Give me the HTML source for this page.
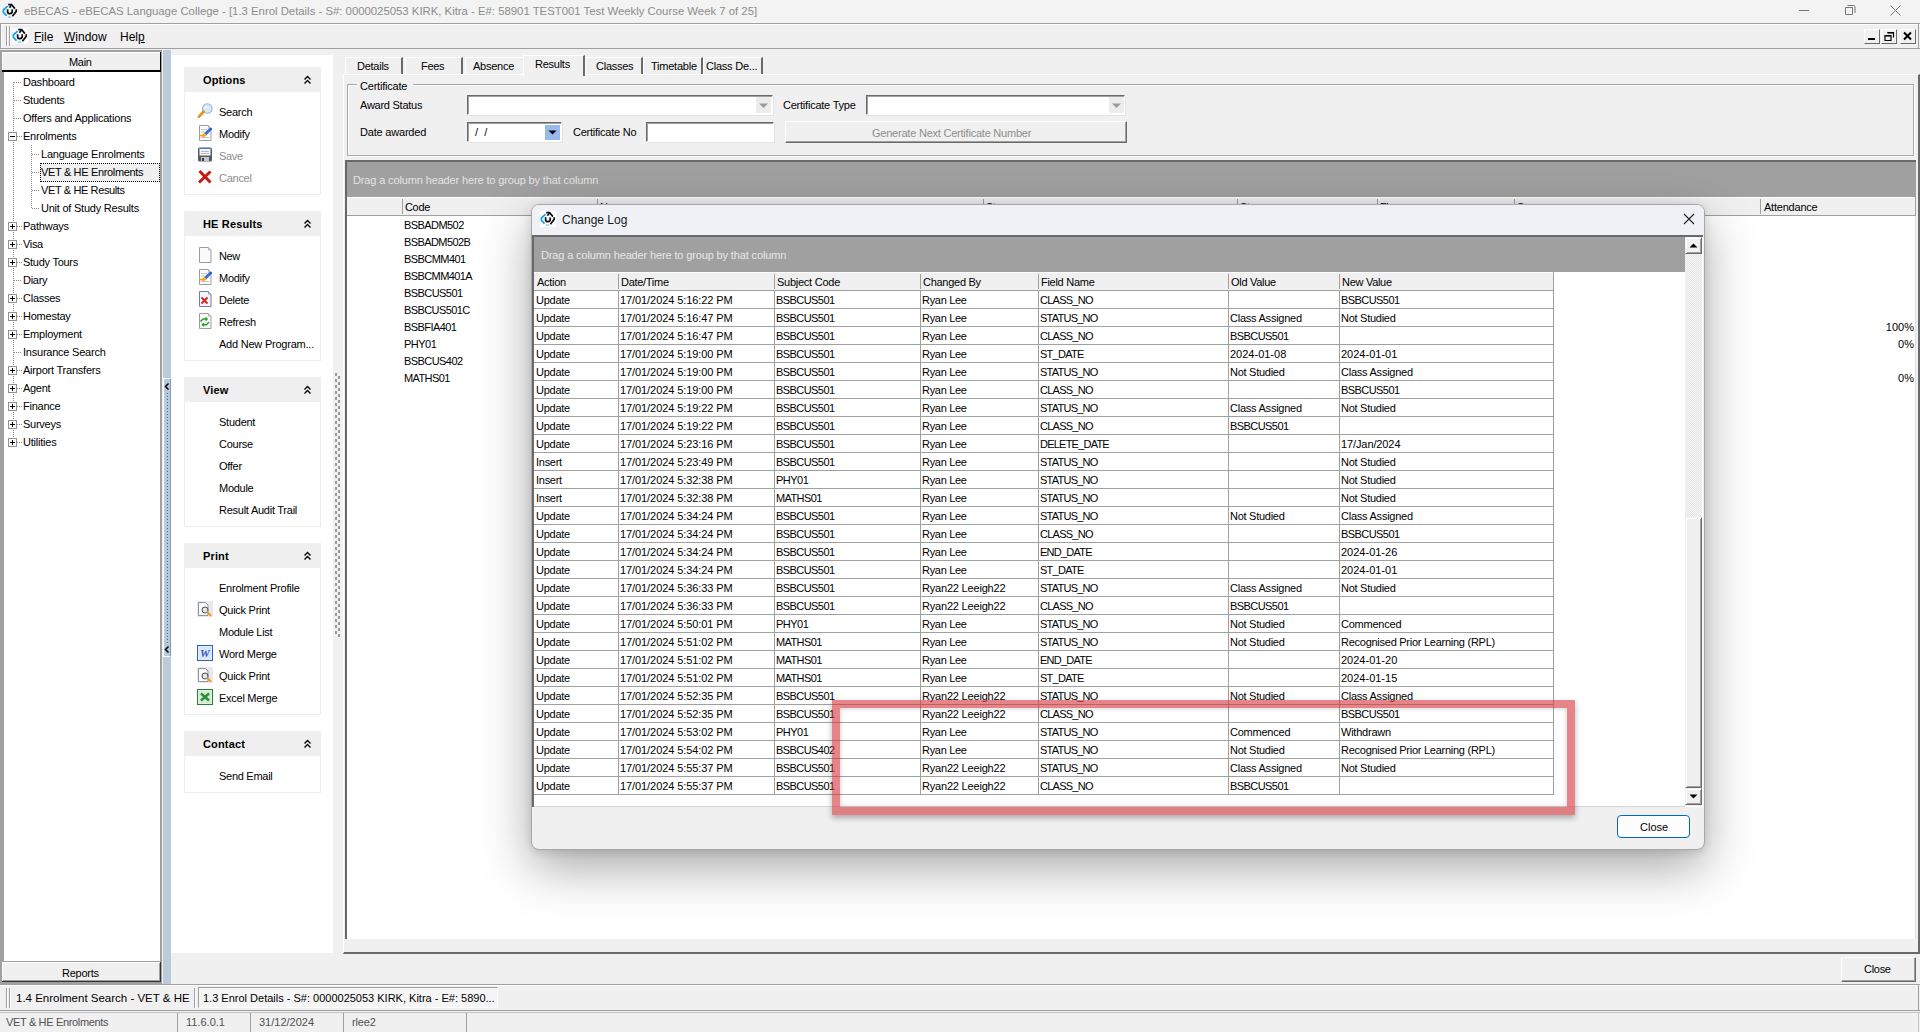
<!DOCTYPE html>
<html><head><meta charset="utf-8">
<style>
*{margin:0;padding:0;box-sizing:border-box}
html,body{width:1920px;height:1032px;overflow:hidden;background:#f0f0f0;font-family:"Liberation Sans",sans-serif;font-size:11px;color:#000}
.a{position:absolute}
.t{position:absolute;white-space:nowrap;line-height:13px}
svg{position:absolute;overflow:visible}
</style></head><body>
<div class="a" style="left:0px;top:0px;width:1920px;height:23px;background:#f3f3f3"></div>
<div class="t" style="left:24px;top:4px;font-size:11.35px;color:#8c8c8c;line-height:15px">eBECAS - eBECAS Language College - [1.3 Enrol Details - S#: 0000025053 KIRK, Kitra - E#: 58901 TEST001 Test Weekly Course Week 7 of 25]</div>
<svg style="left:2px;top:3px" width="16" height="16"><path d="M5.6 3.2 L1.4 7 V9.4 L4.6 12.6" fill="none" stroke="#14a2ec" stroke-width="1.7"/><path d="M6 14 H9.3" stroke="#80d4f7" stroke-width="1.5"/><path d="M6.2 1.6 H9.6 L12.9 5.6" fill="none" stroke="#111" stroke-width="1.7"/><path d="M9.5 2 L7.4 4.8" stroke="#111" stroke-width="1.6"/><path d="M14.2 6.3 V8.4 L10.4 13.2" fill="none" stroke="#111" stroke-width="1.7"/><path d="M5.6 6.3 V8.8 Q5.8 10.7 8 10.7 Q10.3 10.4 10.3 8 L10 6.3" fill="none" stroke="#111" stroke-width="1.7"/></svg>
<svg style="left:1795px;top:3px" width="120" height="16"><path d="M4 7.5 H14" stroke="#777" stroke-width="1"/><path d="M50.5 4.5 h7 v7 h-7 z M52.5 2.5 h6 a1.5 1.5 0 0 1 1.5 1.5 v6" fill="none" stroke="#777" stroke-width="1"/><path d="M95.5 2.5 L105.5 12.5 M105.5 2.5 L95.5 12.5" stroke="#777" stroke-width="1"/></svg>
<div class="a" style="left:0px;top:23px;width:1920px;height:26px;background:#f0f0f0;border-top:1px solid #a0a0a0;border-bottom:1px solid #a0a0a0;box-shadow:inset 0 1px 0 #fff"></div>
<div class="a" style="left:1918px;top:23px;width:1px;height:26px;background:#a0a0a0"></div>
<div class="a" style="left:0px;top:23px;width:1px;height:26px;background:#a0a0a0"></div>
<div class="a" style="left:1px;top:24px;width:1px;height:24px;background:#fff"></div>
<div class="a" style="left:6px;top:26px;width:1px;height:20px;background:#a0a0a0"></div>
<div class="a" style="left:7px;top:26px;width:1px;height:20px;background:#fff"></div>
<div class="a" style="left:9px;top:26px;width:1px;height:20px;background:#a0a0a0"></div>
<div class="a" style="left:10px;top:26px;width:1px;height:20px;background:#fff"></div>
<div class="a" style="left:12px;top:28px;width:16px;height:16px;background:#fafafa"></div>
<svg style="left:12px;top:28px" width="16" height="16"><path d="M5.6 3.2 L1.4 7 V9.4 L4.6 12.6" fill="none" stroke="#14a2ec" stroke-width="1.7"/><path d="M6 14 H9.3" stroke="#80d4f7" stroke-width="1.5"/><path d="M6.2 1.6 H9.6 L12.9 5.6" fill="none" stroke="#111" stroke-width="1.7"/><path d="M9.5 2 L7.4 4.8" stroke="#111" stroke-width="1.6"/><path d="M14.2 6.3 V8.4 L10.4 13.2" fill="none" stroke="#111" stroke-width="1.7"/><path d="M5.6 6.3 V8.8 Q5.8 10.7 8 10.7 Q10.3 10.4 10.3 8 L10 6.3" fill="none" stroke="#111" stroke-width="1.7"/></svg>
<div class="t" style="left:34px;top:30px;font-size:12px;line-height:15px"><u>F</u>ile</div>
<div class="t" style="left:64px;top:30px;font-size:12px;line-height:15px"><u>W</u>indow</div>
<div class="t" style="left:120px;top:30px;font-size:12px;line-height:15px">Hel<u>p</u></div>
<div class="a" style="left:1864px;top:29px;width:16px;height:15px;background:#f0f0f0;border:1px solid;border-color:#fff #696969 #696969 #fff"></div>
<div class="a" style="left:1881px;top:29px;width:16px;height:15px;background:#f0f0f0;border:1px solid;border-color:#fff #696969 #696969 #fff"></div>
<div class="a" style="left:1900px;top:29px;width:16px;height:15px;background:#f0f0f0;border:1px solid;border-color:#fff #696969 #696969 #fff"></div>
<svg style="left:1864px;top:29px" width="56" height="16"><rect x="4" y="9" width="7" height="2" fill="#000"/><path d="M21 6.5 h6 v5 h-6 z" fill="none" stroke="#000" stroke-width="1.2"/><path d="M23.5 3.5 h6 v5" fill="none" stroke="#000" stroke-width="1.2"/><rect x="21" y="6" width="6" height="1.6" fill="#000"/><rect x="23.5" y="3" width="6" height="1.6" fill="#000"/><path d="M40 3.5 L47 10.5 M47 3.5 L40 10.5" stroke="#000" stroke-width="2"/></svg>
<div class="a" style="left:0px;top:50px;width:162px;height:934px;background:#a0a0a0"></div>
<div class="a" style="left:4px;top:71px;width:156px;height:890px;background:#fff"></div>
<div class="a" style="left:2px;top:52px;width:159px;height:20px;background:#f0f0f0;border-right:1px solid #000;border-bottom:2px solid #000;box-shadow:inset 1px 1px 0 #fff"></div>
<div class="t" style="left:69px;top:56px;letter-spacing:-0.325px;">Main</div>
<div class="a" style="left:2px;top:962px;width:159px;height:20px;background:#f0f0f0;border-right:1px solid #333;border-bottom:1px solid #333;box-shadow:inset 1px 1px 0 #fff,inset -1px -1px 0 #a0a0a0"></div>
<div class="t" style="left:62px;top:967px;letter-spacing:-0.250px;">Reports</div>
<div class="a" style="left:13px;top:82px;width:1px;height:361px;background-image:linear-gradient(#888 50%,transparent 50%);background-size:1px 2px"></div>
<div class="a" style="left:31px;top:145px;width:1px;height:64px;background-image:linear-gradient(#888 50%,transparent 50%);background-size:1px 2px"></div>
<div class="a" style="left:14px;top:82px;width:8px;height:1px;background-image:linear-gradient(90deg,#888 50%,transparent 50%);background-size:2px 1px"></div>
<div class="t" style="left:23px;top:76px;letter-spacing:-0.228px;">Dashboard</div>
<div class="a" style="left:14px;top:100px;width:8px;height:1px;background-image:linear-gradient(90deg,#888 50%,transparent 50%);background-size:2px 1px"></div>
<div class="t" style="left:23px;top:94px;letter-spacing:-0.237px;">Students</div>
<div class="a" style="left:14px;top:118px;width:8px;height:1px;background-image:linear-gradient(90deg,#888 50%,transparent 50%);background-size:2px 1px"></div>
<div class="t" style="left:23px;top:112px;letter-spacing:-0.198px;">Offers and Applications</div>
<div class="a" style="left:17px;top:136px;width:5px;height:1px;background-image:linear-gradient(90deg,#888 50%,transparent 50%);background-size:2px 1px"></div>
<div class="a" style="left:8px;top:132px;width:9px;height:9px;background:#fff;border:1px solid #919191"></div>
<div class="a" style="left:10px;top:136px;width:5px;height:1px;background:#000"></div>
<div class="t" style="left:23px;top:130px;letter-spacing:-0.220px;">Enrolments</div>
<div class="a" style="left:32px;top:154px;width:8px;height:1px;background-image:linear-gradient(90deg,#888 50%,transparent 50%);background-size:2px 1px"></div>
<div class="t" style="left:41px;top:148px;letter-spacing:-0.216px;">Language Enrolments</div>
<div class="a" style="left:32px;top:172px;width:8px;height:1px;background-image:linear-gradient(90deg,#888 50%,transparent 50%);background-size:2px 1px"></div>
<div class="a" style="left:40px;top:163px;width:120px;height:19px;background:#f0f0f0;border:1px dotted #000"></div>
<div class="t" style="left:41px;top:166px;letter-spacing:-0.339px;">VET &amp; HE Enrolments</div>
<div class="a" style="left:32px;top:190px;width:8px;height:1px;background-image:linear-gradient(90deg,#888 50%,transparent 50%);background-size:2px 1px"></div>
<div class="t" style="left:41px;top:184px;letter-spacing:-0.375px;">VET &amp; HE Results</div>
<div class="a" style="left:32px;top:208px;width:8px;height:1px;background-image:linear-gradient(90deg,#888 50%,transparent 50%);background-size:2px 1px"></div>
<div class="t" style="left:41px;top:202px;letter-spacing:-0.229px;">Unit of Study Results</div>
<div class="a" style="left:17px;top:226px;width:5px;height:1px;background-image:linear-gradient(90deg,#888 50%,transparent 50%);background-size:2px 1px"></div>
<div class="a" style="left:8px;top:222px;width:9px;height:9px;background:#fff;border:1px solid #919191"></div>
<div class="a" style="left:10px;top:226px;width:5px;height:1px;background:#000"></div>
<div class="a" style="left:12px;top:224px;width:1px;height:5px;background:#000"></div>
<div class="t" style="left:23px;top:220px;letter-spacing:-0.237px;">Pathways</div>
<div class="a" style="left:17px;top:244px;width:5px;height:1px;background-image:linear-gradient(90deg,#888 50%,transparent 50%);background-size:2px 1px"></div>
<div class="a" style="left:8px;top:240px;width:9px;height:9px;background:#fff;border:1px solid #919191"></div>
<div class="a" style="left:10px;top:244px;width:5px;height:1px;background:#000"></div>
<div class="a" style="left:12px;top:242px;width:1px;height:5px;background:#000"></div>
<div class="t" style="left:23px;top:238px;letter-spacing:-0.325px;">Visa</div>
<div class="a" style="left:17px;top:262px;width:5px;height:1px;background-image:linear-gradient(90deg,#888 50%,transparent 50%);background-size:2px 1px"></div>
<div class="a" style="left:8px;top:258px;width:9px;height:9px;background:#fff;border:1px solid #919191"></div>
<div class="a" style="left:10px;top:262px;width:5px;height:1px;background:#000"></div>
<div class="a" style="left:12px;top:260px;width:1px;height:5px;background:#000"></div>
<div class="t" style="left:23px;top:256px;letter-spacing:-0.264px;">Study Tours</div>
<div class="a" style="left:14px;top:280px;width:8px;height:1px;background-image:linear-gradient(90deg,#888 50%,transparent 50%);background-size:2px 1px"></div>
<div class="t" style="left:23px;top:274px;letter-spacing:-0.290px;">Diary</div>
<div class="a" style="left:17px;top:298px;width:5px;height:1px;background-image:linear-gradient(90deg,#888 50%,transparent 50%);background-size:2px 1px"></div>
<div class="a" style="left:8px;top:294px;width:9px;height:9px;background:#fff;border:1px solid #919191"></div>
<div class="a" style="left:10px;top:298px;width:5px;height:1px;background:#000"></div>
<div class="a" style="left:12px;top:296px;width:1px;height:5px;background:#000"></div>
<div class="t" style="left:23px;top:292px;letter-spacing:-0.250px;">Classes</div>
<div class="a" style="left:17px;top:316px;width:5px;height:1px;background-image:linear-gradient(90deg,#888 50%,transparent 50%);background-size:2px 1px"></div>
<div class="a" style="left:8px;top:312px;width:9px;height:9px;background:#fff;border:1px solid #919191"></div>
<div class="a" style="left:10px;top:316px;width:5px;height:1px;background:#000"></div>
<div class="a" style="left:12px;top:314px;width:1px;height:5px;background:#000"></div>
<div class="t" style="left:23px;top:310px;letter-spacing:-0.237px;">Homestay</div>
<div class="a" style="left:17px;top:334px;width:5px;height:1px;background-image:linear-gradient(90deg,#888 50%,transparent 50%);background-size:2px 1px"></div>
<div class="a" style="left:8px;top:330px;width:9px;height:9px;background:#fff;border:1px solid #919191"></div>
<div class="a" style="left:10px;top:334px;width:5px;height:1px;background:#000"></div>
<div class="a" style="left:12px;top:332px;width:1px;height:5px;background:#000"></div>
<div class="t" style="left:23px;top:328px;letter-spacing:-0.220px;">Employment</div>
<div class="a" style="left:14px;top:352px;width:8px;height:1px;background-image:linear-gradient(90deg,#888 50%,transparent 50%);background-size:2px 1px"></div>
<div class="t" style="left:23px;top:346px;letter-spacing:-0.228px;">Insurance Search</div>
<div class="a" style="left:17px;top:370px;width:5px;height:1px;background-image:linear-gradient(90deg,#888 50%,transparent 50%);background-size:2px 1px"></div>
<div class="a" style="left:8px;top:366px;width:9px;height:9px;background:#fff;border:1px solid #919191"></div>
<div class="a" style="left:10px;top:370px;width:5px;height:1px;background:#000"></div>
<div class="a" style="left:12px;top:368px;width:1px;height:5px;background:#000"></div>
<div class="t" style="left:23px;top:364px;letter-spacing:-0.224px;">Airport Transfers</div>
<div class="a" style="left:17px;top:388px;width:5px;height:1px;background-image:linear-gradient(90deg,#888 50%,transparent 50%);background-size:2px 1px"></div>
<div class="a" style="left:8px;top:384px;width:9px;height:9px;background:#fff;border:1px solid #919191"></div>
<div class="a" style="left:10px;top:388px;width:5px;height:1px;background:#000"></div>
<div class="a" style="left:12px;top:386px;width:1px;height:5px;background:#000"></div>
<div class="t" style="left:23px;top:382px;letter-spacing:-0.290px;">Agent</div>
<div class="a" style="left:17px;top:406px;width:5px;height:1px;background-image:linear-gradient(90deg,#888 50%,transparent 50%);background-size:2px 1px"></div>
<div class="a" style="left:8px;top:402px;width:9px;height:9px;background:#fff;border:1px solid #919191"></div>
<div class="a" style="left:10px;top:406px;width:5px;height:1px;background:#000"></div>
<div class="a" style="left:12px;top:404px;width:1px;height:5px;background:#000"></div>
<div class="t" style="left:23px;top:400px;letter-spacing:-0.250px;">Finance</div>
<div class="a" style="left:17px;top:424px;width:5px;height:1px;background-image:linear-gradient(90deg,#888 50%,transparent 50%);background-size:2px 1px"></div>
<div class="a" style="left:8px;top:420px;width:9px;height:9px;background:#fff;border:1px solid #919191"></div>
<div class="a" style="left:10px;top:424px;width:5px;height:1px;background:#000"></div>
<div class="a" style="left:12px;top:422px;width:1px;height:5px;background:#000"></div>
<div class="t" style="left:23px;top:418px;letter-spacing:-0.250px;">Surveys</div>
<div class="a" style="left:17px;top:442px;width:5px;height:1px;background-image:linear-gradient(90deg,#888 50%,transparent 50%);background-size:2px 1px"></div>
<div class="a" style="left:8px;top:438px;width:9px;height:9px;background:#fff;border:1px solid #919191"></div>
<div class="a" style="left:10px;top:442px;width:5px;height:1px;background:#000"></div>
<div class="a" style="left:12px;top:440px;width:1px;height:5px;background:#000"></div>
<div class="t" style="left:23px;top:436px;letter-spacing:-0.228px;">Utilities</div>
<div class="a" style="left:163px;top:50px;width:8px;height:934px;background:#bccbdc"></div>
<div class="a" style="left:163px;top:378px;width:8px;height:279px;background:#b7c9dd;border:1px solid #fff;border-right-color:#8a9bb0"></div>
<svg style="left:163px;top:382px" width="8" height="12"><path d="M5.5 1.5 L2.5 4.5 L5.5 7.5" fill="none" stroke="#000" stroke-width="1.5"/></svg>
<svg style="left:163px;top:645px" width="8" height="12"><path d="M5.5 1.5 L2.5 4.5 L5.5 7.5" fill="none" stroke="#000" stroke-width="1.5"/></svg>
<div class="a" style="left:167px;top:393px;width:1px;height:250px;background-image:linear-gradient(#1e6fd0 50%,transparent 50%);background-size:1px 3px"></div>
<div class="a" style="left:171px;top:55px;width:162px;height:898px;background:#fff"></div>
<div class="a" style="left:333px;top:55px;width:10px;height:898px;background:#f0f0f0"></div>
<div class="a" style="left:335px;top:373px;width:2px;height:264px;background-image:linear-gradient(#9a9a9a 50%,transparent 50%);background-size:2px 6px"></div>
<div class="a" style="left:338px;top:376px;width:2px;height:261px;background-image:linear-gradient(#9a9a9a 50%,transparent 50%);background-size:2px 6px"></div>
<div class="a" style="left:184px;top:67px;width:137px;height:25px;background:#efefef"></div>
<div class="t" style="left:203px;top:74px;font-weight:bold;letter-spacing:0.15px">Options</div>
<svg style="left:303px;top:75px" width="10" height="10"><path d="M1.5 4.5 L4.5 1.5 L7.5 4.5 M1.5 8.5 L4.5 5.5 L7.5 8.5" fill="none" stroke="#000" stroke-width="1.4"/></svg>
<div class="a" style="left:184px;top:92px;width:137px;height:103px;background:#fff;border:1px solid #ececec;border-top:none"></div>
<div class="t" style="left:219px;top:106px;letter-spacing:-0.267px;color:#000">Search</div>
<svg style="left:197px;top:103px" width="16" height="16"><circle cx="10.3" cy="5.5" r="4.8" fill="#d4ecf9" stroke="#9bb4dc" stroke-width="1.1"/><circle cx="9" cy="4.2" r="1.3" fill="#f4fbff"/><path d="M6.6 8.6 L2 13.6" stroke="#e8901f" stroke-width="2.8" stroke-linecap="round"/></svg>
<div class="t" style="left:219px;top:128px;letter-spacing:-0.267px;color:#000">Modify</div>
<svg style="left:197px;top:125px" width="16" height="16"><path d="M2.5 0.5 h9 l2.5 2.5 v12.5 h-11.5 z" fill="#fbfbfb" stroke="#9c9c9c"/><path d="M11.5 0.5 v2.5 h2.5" fill="#e6e6e6" stroke="#b5b5b5"/><path d="M4 4.5h6M4 7h5M4 12.5h8" stroke="#c6c6c6"/><path d="M8 9.5 L13.5 4" stroke="#2f72d8" stroke-width="3"/><path d="M13.2 3.2 L14.6 4.6" stroke="#1a4fa0" stroke-width="2"/><path d="M5.5 11.5 L8.5 9" stroke="#f2b21c" stroke-width="3"/><path d="M2 10.6 h5" stroke="#f0a020" stroke-width="1.6"/></svg>
<div class="t" style="left:219px;top:150px;letter-spacing:-0.325px;color:#8d8d8d">Save</div>
<svg style="left:197px;top:147px" width="16" height="16"><rect x="1" y="0.5" width="14" height="14" rx="1.5" fill="#555b61"/><rect x="2.5" y="1" width="11" height="7.5" fill="#f6f6f6"/><rect x="2.5" y="1" width="11" height="1" fill="#3d7fd6"/><path d="M4 4.5h8M4 6.5h8" stroke="#b9b9b9"/><rect x="4" y="10" width="8" height="4.5" fill="#c4c8cc"/><rect x="5" y="11" width="2" height="3" fill="#3b3b3b"/></svg>
<div class="t" style="left:219px;top:172px;letter-spacing:-0.267px;color:#8d8d8d">Cancel</div>
<svg style="left:197px;top:169px" width="16" height="16"><path d="M2.5 2 L13.5 13.5 M13.5 2.5 L2 13.5" stroke="#c81a0c" stroke-width="3"/></svg>
<div class="a" style="left:184px;top:211px;width:137px;height:25px;background:#efefef"></div>
<div class="t" style="left:203px;top:218px;font-weight:bold;letter-spacing:0.15px">HE Results</div>
<svg style="left:303px;top:219px" width="10" height="10"><path d="M1.5 4.5 L4.5 1.5 L7.5 4.5 M1.5 8.5 L4.5 5.5 L7.5 8.5" fill="none" stroke="#000" stroke-width="1.4"/></svg>
<div class="a" style="left:184px;top:236px;width:137px;height:125px;background:#fff;border:1px solid #ececec;border-top:none"></div>
<div class="t" style="left:219px;top:250px;letter-spacing:-0.383px;color:#000">New</div>
<svg style="left:197px;top:247px" width="16" height="16"><path d="M2.5 0.5 h9 l2.5 2.5 v12.5 h-11.5 z" fill="#fbfbfb" stroke="#9c9c9c"/><path d="M11.5 0.5 v2.5 h2.5" fill="#e6e6e6" stroke="#b5b5b5"/></svg>
<div class="t" style="left:219px;top:272px;letter-spacing:-0.267px;color:#000">Modify</div>
<svg style="left:197px;top:269px" width="16" height="16"><path d="M2.5 0.5 h9 l2.5 2.5 v12.5 h-11.5 z" fill="#fbfbfb" stroke="#9c9c9c"/><path d="M11.5 0.5 v2.5 h2.5" fill="#e6e6e6" stroke="#b5b5b5"/><path d="M4 4.5h6M4 7h5M4 12.5h8" stroke="#c6c6c6"/><path d="M8 9.5 L13.5 4" stroke="#2f72d8" stroke-width="3"/><path d="M13.2 3.2 L14.6 4.6" stroke="#1a4fa0" stroke-width="2"/><path d="M5.5 11.5 L8.5 9" stroke="#f2b21c" stroke-width="3"/><path d="M2 10.6 h5" stroke="#f0a020" stroke-width="1.6"/></svg>
<div class="t" style="left:219px;top:294px;letter-spacing:-0.267px;color:#000">Delete</div>
<svg style="left:197px;top:291px" width="16" height="16"><path d="M2.5 0.5 h9 l2.5 2.5 v12.5 h-11.5 z" fill="#f2f5fa" stroke="#6d7fa3"/><path d="M11.5 0.5 v2.5 h2.5" fill="#dde3ee" stroke="#8a9ab8"/><path d="M4.5 6.5 L10.5 12.5 M10.5 6.5 L4.5 12.5" stroke="#d02a22" stroke-width="2"/></svg>
<div class="t" style="left:219px;top:316px;letter-spacing:-0.250px;color:#000">Refresh</div>
<svg style="left:197px;top:313px" width="16" height="16"><path d="M2.5 0.5 h9 l2.5 2.5 v12.5 h-11.5 z" fill="#fbfbfb" stroke="#9c9c9c"/><path d="M11.5 0.5 v2.5 h2.5" fill="#e6e6e6" stroke="#b5b5b5"/><path d="M3.5 8.5 L6 6 L9.5 6 M8.5 4.5 L10 6 L8.5 7.5" fill="none" stroke="#2aa52a" stroke-width="1.6"/><path d="M12 9 L9.5 11.8 L5.8 11.8 M7 10.2 L5.5 11.8 L7 13.2" fill="none" stroke="#2aa52a" stroke-width="1.6"/></svg>
<div class="t" style="left:219px;top:338px;letter-spacing:-0.225px;color:#000">Add New Program...</div>
<div class="a" style="left:184px;top:377px;width:137px;height:25px;background:#efefef"></div>
<div class="t" style="left:203px;top:384px;font-weight:bold;letter-spacing:0.15px">View</div>
<svg style="left:303px;top:385px" width="10" height="10"><path d="M1.5 4.5 L4.5 1.5 L7.5 4.5 M1.5 8.5 L4.5 5.5 L7.5 8.5" fill="none" stroke="#000" stroke-width="1.4"/></svg>
<div class="a" style="left:184px;top:402px;width:137px;height:125px;background:#fff;border:1px solid #ececec;border-top:none"></div>
<div class="t" style="left:219px;top:416px;letter-spacing:-0.250px;color:#000">Student</div>
<div class="t" style="left:219px;top:438px;letter-spacing:-0.267px;color:#000">Course</div>
<div class="t" style="left:219px;top:460px;letter-spacing:-0.290px;color:#000">Offer</div>
<div class="t" style="left:219px;top:482px;letter-spacing:-0.267px;color:#000">Module</div>
<div class="t" style="left:219px;top:504px;letter-spacing:-0.250px;color:#000">Result Audit Trail</div>
<div class="a" style="left:184px;top:543px;width:137px;height:25px;background:#efefef"></div>
<div class="t" style="left:203px;top:550px;font-weight:bold;letter-spacing:0.15px">Print</div>
<svg style="left:303px;top:551px" width="10" height="10"><path d="M1.5 4.5 L4.5 1.5 L7.5 4.5 M1.5 8.5 L4.5 5.5 L7.5 8.5" fill="none" stroke="#000" stroke-width="1.4"/></svg>
<div class="a" style="left:184px;top:568px;width:137px;height:147px;background:#fff;border:1px solid #ececec;border-top:none"></div>
<div class="t" style="left:219px;top:582px;letter-spacing:-0.224px;color:#000">Enrolment Profile</div>
<div class="t" style="left:219px;top:604px;letter-spacing:-0.264px;color:#000">Quick Print</div>
<svg style="left:197px;top:601px" width="16" height="16"><rect x="0" y="0" width="16" height="16" fill="#e9e9ea"/><path d="M1.5 1.5 h7 l2.5 2.5 v10.5 h-9.5 z" fill="#fbfcfe" stroke="#8a93a6"/><circle cx="8" cy="9" r="3" fill="#dfe9f3" stroke="#4b4b4b" stroke-width="1"/><path d="M10.2 11.2 L13.6 14.2" stroke="#ec9a2e" stroke-width="2.2" stroke-linecap="round"/></svg>
<div class="t" style="left:219px;top:626px;letter-spacing:-0.264px;color:#000">Module List</div>
<div class="t" style="left:219px;top:648px;letter-spacing:-0.275px;color:#000">Word Merge</div>
<svg style="left:197px;top:645px" width="16" height="16"><rect x="0.5" y="0.5" width="15" height="15" fill="#eef3fc" stroke="#2d5fbf"/><rect x="1.5" y="1.5" width="13" height="13" fill="#dbe5f8"/><text x="8" y="12" font-family="Liberation Serif" font-style="italic" font-weight="bold" font-size="11" text-anchor="middle" fill="#2a58b8">W</text></svg>
<div class="t" style="left:219px;top:670px;letter-spacing:-0.264px;color:#000">Quick Print</div>
<svg style="left:197px;top:667px" width="16" height="16"><rect x="0" y="0" width="16" height="16" fill="#e9e9ea"/><path d="M1.5 1.5 h7 l2.5 2.5 v10.5 h-9.5 z" fill="#fbfcfe" stroke="#8a93a6"/><circle cx="8" cy="9" r="3" fill="#dfe9f3" stroke="#4b4b4b" stroke-width="1"/><path d="M10.2 11.2 L13.6 14.2" stroke="#ec9a2e" stroke-width="2.2" stroke-linecap="round"/></svg>
<div class="t" style="left:219px;top:692px;letter-spacing:-0.264px;color:#000">Excel Merge</div>
<svg style="left:197px;top:689px" width="16" height="16"><rect x="0.5" y="0.5" width="15" height="15" fill="#e9f5e9" stroke="#2e7d3c"/><rect x="1.5" y="1.5" width="13" height="13" fill="#d4ecd4"/><path d="M4 4.5 L12 11.5 M12 4.5 L4 11.5" stroke="#2a8f3a" stroke-width="2.4"/></svg>
<div class="a" style="left:184px;top:731px;width:137px;height:25px;background:#efefef"></div>
<div class="t" style="left:203px;top:738px;font-weight:bold;letter-spacing:0.15px">Contact</div>
<svg style="left:303px;top:739px" width="10" height="10"><path d="M1.5 4.5 L4.5 1.5 L7.5 4.5 M1.5 8.5 L4.5 5.5 L7.5 8.5" fill="none" stroke="#000" stroke-width="1.4"/></svg>
<div class="a" style="left:184px;top:756px;width:137px;height:37px;background:#fff;border:1px solid #ececec;border-top:none"></div>
<div class="t" style="left:219px;top:770px;letter-spacing:-0.275px;color:#000">Send Email</div>
<div class="a" style="left:343px;top:74px;width:1577px;height:880px;background:#f0f0f0;border-left:1px solid #fff;border-top:1px solid #fff;border-right:2px solid #696969;border-bottom:2px solid #696969"></div>
<div class="a" style="left:345px;top:57px;width:58px;height:17px;background:#f0f0f0;border-left:1px solid #fff;border-top:1px solid #fff;border-right:2px solid #696969"></div>
<div class="t" style="left:357px;top:60px;letter-spacing:-0.250px;">Details</div>
<div class="a" style="left:405px;top:57px;width:58px;height:17px;background:#f0f0f0;border-left:1px solid #fff;border-top:1px solid #fff;border-right:2px solid #696969"></div>
<div class="t" style="left:421px;top:60px;letter-spacing:-0.325px;">Fees</div>
<div class="a" style="left:465px;top:57px;width:58px;height:17px;background:#f0f0f0;border-left:1px solid #fff;border-top:1px solid #fff;"></div>
<div class="t" style="left:473px;top:60px;letter-spacing:-0.250px;">Absence</div>
<div class="a" style="left:523px;top:55px;width:62px;height:21px;background:#f0f0f0;border-left:1px solid #fff;border-top:1px solid #fff;border-right:2px solid #696969"></div>
<div class="t" style="left:535px;top:58px;letter-spacing:-0.250px;">Results</div>
<div class="a" style="left:585px;top:57px;width:58px;height:17px;background:#f0f0f0;border-left:1px solid #fff;border-top:1px solid #fff;border-right:2px solid #696969"></div>
<div class="t" style="left:596px;top:60px;letter-spacing:-0.250px;">Classes</div>
<div class="a" style="left:643px;top:57px;width:60px;height:17px;background:#f0f0f0;border-left:1px solid #fff;border-top:1px solid #fff;border-right:2px solid #696969"></div>
<div class="t" style="left:651px;top:60px;letter-spacing:-0.228px;">Timetable</div>
<div class="a" style="left:703px;top:57px;width:60px;height:17px;background:#f0f0f0;border-left:1px solid #fff;border-top:1px solid #fff;border-right:2px solid #696969"></div>
<div class="t" style="left:706px;top:60px;letter-spacing:-0.223px;">Class De...</div>
<div class="a" style="left:347px;top:84px;width:1567px;height:72px;border:1px solid #a8a8a8;box-shadow:1px 1px 0 #fff inset, 1px 1px 0 #fff"></div>
<div class="a" style="left:357px;top:79px;width:56px;height:12px;background:#f0f0f0"></div>
<div class="t" style="left:360px;top:80px;letter-spacing:-0.214px;">Certificate</div>
<div class="t" style="left:360px;top:99px;letter-spacing:-0.254px;">Award Status</div>
<div class="t" style="left:360px;top:126px;letter-spacing:-0.196px;">Date awarded</div>
<div class="t" style="left:783px;top:99px;letter-spacing:-0.228px;">Certificate Type</div>
<div class="t" style="left:573px;top:126px;letter-spacing:-0.239px;">Certificate No</div>
<div class="a" style="left:467px;top:95px;width:306px;height:20px;background:#fff;border:1px solid;border-color:#696969 #fff #fff #696969;box-shadow:inset 1px 1px 0 #a0a0a0, 1px 1px 0 #e3e3e3"></div>
<div class="a" style="left:756px;top:97px;width:15px;height:16px;background:#ececec"></div>
<svg style="left:757px;top:102px" width="12" height="8"><path d="M2 1.5 L6.5 6 L11 1.5 z" fill="#9a9a9a"/></svg>
<div class="a" style="left:866px;top:95px;width:259px;height:20px;background:#fff;border:1px solid;border-color:#696969 #fff #fff #696969;box-shadow:inset 1px 1px 0 #a0a0a0, 1px 1px 0 #e3e3e3"></div>
<div class="a" style="left:1109px;top:97px;width:15px;height:16px;background:#ececec"></div>
<svg style="left:1110px;top:102px" width="12" height="8"><path d="M2 1.5 L6.5 6 L11 1.5 z" fill="#9a9a9a"/></svg>
<div class="a" style="left:467px;top:122px;width:95px;height:20px;background:#fff;border:1px solid;border-color:#696969 #fff #fff #696969;box-shadow:inset 1px 1px 0 #a0a0a0, 1px 1px 0 #e3e3e3"></div>
<div class="t" style="left:475px;top:126px;letter-spacing:0.000px;">/&nbsp; /</div>
<div class="a" style="left:545px;top:125px;width:15px;height:15px;background:#99b9ee"></div>
<svg style="left:545px;top:129px" width="15" height="8"><path d="M3.5 1.5 L7.5 5.5 L11.5 1.5 z" fill="#000"/></svg>
<div class="a" style="left:646px;top:122px;width:128px;height:20px;background:#fff;border:1px solid;border-color:#696969 #fff #fff #696969;box-shadow:inset 1px 1px 0 #a0a0a0, 1px 1px 0 #e3e3e3"></div>
<div class="a" style="left:785px;top:121px;width:342px;height:22px;background:#f0f0f0;border:1px solid;border-color:#fff #696969 #696969 #fff;box-shadow:inset -1px -1px 0 #a0a0a0"></div>
<div class="t" style="left:872px;top:127px;letter-spacing:-0.223px;color:#8d8d8d">Generate Next Certificate Number</div>
<div class="a" style="left:345px;top:160px;width:1571px;height:779px;background:#fff;border-top:2px solid #696969;border-left:2px solid #696969"></div>
<div class="a" style="left:347px;top:162px;width:1569px;height:35px;background:#a0a0a0"></div>
<div class="t" style="left:353px;top:174px;letter-spacing:-0.137px;color:#e3e3e3">Drag a column header here to group by that column</div>
<div class="a" style="left:347px;top:197px;width:1568px;height:19px;background:#f0f0f0;border-bottom:1px solid #a0a0a0;border-top:1px solid #fff"></div>
<div class="a" style="left:402px;top:199px;width:1px;height:15px;background:#a0a0a0"></div>
<div class="a" style="left:597px;top:199px;width:1px;height:15px;background:#a0a0a0"></div>
<div class="a" style="left:983px;top:199px;width:1px;height:15px;background:#a0a0a0"></div>
<div class="a" style="left:1237px;top:199px;width:1px;height:15px;background:#a0a0a0"></div>
<div class="a" style="left:1377px;top:199px;width:1px;height:15px;background:#a0a0a0"></div>
<div class="a" style="left:1514px;top:199px;width:1px;height:15px;background:#a0a0a0"></div>
<div class="a" style="left:1760px;top:199px;width:1px;height:15px;background:#a0a0a0"></div>
<div class="a" style="left:1915px;top:197px;width:1px;height:19px;background:#a0a0a0"></div>
<div class="t" style="left:405px;top:201px;letter-spacing:-0.325px;">Code</div>
<div class="t" style="left:600px;top:201px;letter-spacing:-0.850px;">N</div>
<div class="t" style="left:986px;top:201px;letter-spacing:-0.500px;">St</div>
<div class="t" style="left:1240px;top:201px;letter-spacing:-0.500px;">St</div>
<div class="t" style="left:1380px;top:201px;letter-spacing:-0.500px;">Fi</div>
<div class="t" style="left:1517px;top:201px;letter-spacing:-0.500px;">Sc</div>
<div class="t" style="left:1764px;top:201px;letter-spacing:-0.220px;">Attendance</div>
<div class="t" style="left:404px;top:219px;letter-spacing:-0.567px;">BSBADM502</div>
<div class="t" style="left:404px;top:236px;letter-spacing:-0.595px;">BSBADM502B</div>
<div class="t" style="left:404px;top:253px;letter-spacing:-0.567px;">BSBCMM401</div>
<div class="t" style="left:404px;top:270px;letter-spacing:-0.595px;">BSBCMM401A</div>
<div class="t" style="left:404px;top:287px;letter-spacing:-0.567px;">BSBCUS501</div>
<div class="t" style="left:404px;top:304px;letter-spacing:-0.595px;">BSBCUS501C</div>
<div class="t" style="left:404px;top:321px;letter-spacing:-0.567px;">BSBFIA401</div>
<div class="t" style="left:404px;top:338px;letter-spacing:-0.510px;">PHY01</div>
<div class="t" style="left:404px;top:355px;letter-spacing:-0.567px;">BSBCUS402</div>
<div class="t" style="left:404px;top:372px;letter-spacing:-0.607px;">MATHS01</div>
<div class="t" style="left:1814px;top:321px;letter-spacing:0.000px;width:100px;text-align:right">100%</div>
<div class="t" style="left:1814px;top:338px;letter-spacing:0.000px;width:100px;text-align:right">0%</div>
<div class="t" style="left:1814px;top:372px;letter-spacing:0.000px;width:100px;text-align:right">0%</div>
<div class="a" style="left:1915px;top:216px;width:1px;height:723px;background:#e0e0e0"></div>
<div class="a" style="left:1841px;top:957px;width:75px;height:25px;background:#f0f0f0;border:1px solid;border-color:#fff #696969 #696969 #fff;box-shadow:inset -1px -1px 0 #a0a0a0"></div>
<div class="t" style="left:1864px;top:963px;letter-spacing:-0.290px;">Close</div>
<div class="a" style="left:0px;top:984px;width:1920px;height:1px;background:#a0a0a0"></div>
<div class="a" style="left:0px;top:985px;width:1920px;height:1px;background:#fff"></div>
<div class="a" style="left:6px;top:988px;width:1px;height:20px;background:#a0a0a0"></div>
<div class="a" style="left:7px;top:988px;width:1px;height:20px;background:#fff"></div>
<div class="a" style="left:9px;top:988px;width:1px;height:20px;background:#a0a0a0"></div>
<div class="a" style="left:10px;top:988px;width:1px;height:20px;background:#fff"></div>
<div class="t" style="left:16px;top:992px;font-size:11.5px">1.4 Enrolment Search - VET &amp; HE</div>
<div class="a" style="left:194px;top:988px;width:1px;height:20px;background:#a0a0a0"></div>
<div class="a" style="left:195px;top:988px;width:1px;height:20px;background:#fff"></div>
<div class="a" style="left:198px;top:987px;width:300px;height:21px;background:#f5f5f5;border:1px solid;border-color:#a0a0a0 #fff #fff #a0a0a0"></div>
<div class="t" style="left:203px;top:992px;font-size:11px">1.3 Enrol Details - S#: 0000025053 KIRK, Kitra - E#: 5890...</div>
<div class="a" style="left:0px;top:1010px;width:1920px;height:1px;background:#a0a0a0"></div>
<div class="a" style="left:0px;top:1012px;width:1920px;height:1px;background:#c4c4c4"></div>
<div class="a" style="left:1918px;top:985px;width:1px;height:26px;background:#a0a0a0"></div>
<div class="a" style="left:1918px;top:1013px;width:1px;height:19px;background:#c4c4c4"></div>
<div class="a" style="left:177px;top:1013px;width:1px;height:19px;background:#a0a0a0"></div>
<div class="a" style="left:250px;top:1013px;width:1px;height:19px;background:#a0a0a0"></div>
<div class="a" style="left:343px;top:1013px;width:1px;height:19px;background:#a0a0a0"></div>
<div class="a" style="left:466px;top:1013px;width:1px;height:19px;background:#a0a0a0"></div>
<div class="t" style="left:6px;top:1016px;letter-spacing:-0.339px;color:#505050">VET &amp; HE Enrolments</div>
<div class="t" style="left:186px;top:1016px;letter-spacing:0.000px;color:#505050">11.6.0.1</div>
<div class="t" style="left:259px;top:1016px;letter-spacing:0.000px;color:#505050">31/12/2024</div>
<div class="t" style="left:352px;top:1016px;letter-spacing:-0.120px;color:#505050">rlee2</div>
<div class="a" style="left:531px;top:204px;width:1174px;height:646px;background:#f0f0f0;border:1px solid #a8a8a8;border-radius:8px;box-shadow:0 18px 50px rgba(0,0,0,.34),0 2px 10px rgba(0,0,0,.12)"></div>
<div class="a" style="left:532px;top:205px;width:1172px;height:31px;background:#eff1f6;border-radius:7px 7px 0 0"></div>
<div class="a" style="left:540px;top:211px;width:16px;height:16px;background:#fff"></div>
<svg style="left:540px;top:211px" width="16" height="16"><path d="M5.6 3.2 L1.4 7 V9.4 L4.6 12.6" fill="none" stroke="#14a2ec" stroke-width="1.7"/><path d="M6 14 H9.3" stroke="#80d4f7" stroke-width="1.5"/><path d="M6.2 1.6 H9.6 L12.9 5.6" fill="none" stroke="#111" stroke-width="1.7"/><path d="M9.5 2 L7.4 4.8" stroke="#111" stroke-width="1.6"/><path d="M14.2 6.3 V8.4 L10.4 13.2" fill="none" stroke="#111" stroke-width="1.7"/><path d="M5.6 6.3 V8.8 Q5.8 10.7 8 10.7 Q10.3 10.4 10.3 8 L10 6.3" fill="none" stroke="#111" stroke-width="1.7"/></svg>
<div class="t" style="left:562px;top:213px;font-size:12px;line-height:15px;color:#1a1a1a">Change Log</div>
<svg style="left:1683px;top:213px" width="14" height="14"><path d="M1 1 L11 11 M11 1 L1 11" stroke="#222" stroke-width="1.1"/></svg>
<div class="a" style="left:532px;top:235px;width:1171px;height:572px;background:#fff;border-top:2px solid #696969;border-left:2px solid #696969"></div>
<div class="a" style="left:534px;top:237px;width:1151px;height:35px;background:#a0a0a0"></div>
<div class="t" style="left:541px;top:249px;letter-spacing:-0.137px;color:#e6e6e6">Drag a column header here to group by that column</div>
<div class="a" style="left:534px;top:272px;width:1019px;height:19px;background:#f0f0f0;border-bottom:1px solid #a0a0a0;border-top:1px solid #fff"></div>
<div class="a" style="left:618px;top:274px;width:1px;height:15px;background:#a0a0a0"></div>
<div class="a" style="left:774px;top:274px;width:1px;height:15px;background:#a0a0a0"></div>
<div class="a" style="left:920px;top:274px;width:1px;height:15px;background:#a0a0a0"></div>
<div class="a" style="left:1038px;top:274px;width:1px;height:15px;background:#a0a0a0"></div>
<div class="a" style="left:1228px;top:274px;width:1px;height:15px;background:#a0a0a0"></div>
<div class="a" style="left:1339px;top:274px;width:1px;height:15px;background:#a0a0a0"></div>
<div class="a" style="left:1553px;top:272px;width:1px;height:19px;background:#a0a0a0"></div>
<div class="t" style="left:537px;top:276px;letter-spacing:-0.267px;">Action</div>
<div class="t" style="left:621px;top:276px;letter-spacing:-0.289px;">Date/Time</div>
<div class="t" style="left:777px;top:276px;letter-spacing:-0.254px;">Subject Code</div>
<div class="t" style="left:923px;top:276px;letter-spacing:-0.275px;">Changed By</div>
<div class="t" style="left:1041px;top:276px;letter-spacing:-0.275px;">Field Name</div>
<div class="t" style="left:1231px;top:276px;letter-spacing:-0.289px;">Old Value</div>
<div class="t" style="left:1342px;top:276px;letter-spacing:-0.289px;">New Value</div>
<div class="a" style="left:618px;top:291px;width:1px;height:504px;background:#a0a0a0"></div>
<div class="a" style="left:774px;top:291px;width:1px;height:504px;background:#a0a0a0"></div>
<div class="a" style="left:920px;top:291px;width:1px;height:504px;background:#a0a0a0"></div>
<div class="a" style="left:1038px;top:291px;width:1px;height:504px;background:#a0a0a0"></div>
<div class="a" style="left:1228px;top:291px;width:1px;height:504px;background:#a0a0a0"></div>
<div class="a" style="left:1339px;top:291px;width:1px;height:504px;background:#a0a0a0"></div>
<div class="a" style="left:1553px;top:291px;width:1px;height:504px;background:#a0a0a0"></div>
<div class="a" style="left:534px;top:308px;width:1019px;height:1px;background:#a0a0a0"></div>
<div class="t" style="left:536px;top:294px;letter-spacing:-0.267px;">Update</div>
<div class="t" style="left:620px;top:294px;letter-spacing:-0.081px;">17/01/2024 5:16:22 PM</div>
<div class="t" style="left:776px;top:294px;letter-spacing:-0.567px;">BSBCUS501</div>
<div class="t" style="left:922px;top:294px;letter-spacing:-0.306px;">Ryan Lee</div>
<div class="t" style="left:1040px;top:294px;letter-spacing:-0.744px;">CLASS_NO</div>
<div class="t" style="left:1341px;top:294px;letter-spacing:-0.567px;">BSBCUS501</div>
<div class="a" style="left:534px;top:326px;width:1019px;height:1px;background:#a0a0a0"></div>
<div class="t" style="left:536px;top:312px;letter-spacing:-0.267px;">Update</div>
<div class="t" style="left:620px;top:312px;letter-spacing:-0.081px;">17/01/2024 5:16:47 PM</div>
<div class="t" style="left:776px;top:312px;letter-spacing:-0.567px;">BSBCUS501</div>
<div class="t" style="left:922px;top:312px;letter-spacing:-0.306px;">Ryan Lee</div>
<div class="t" style="left:1040px;top:312px;letter-spacing:-0.756px;">STATUS_NO</div>
<div class="t" style="left:1230px;top:312px;letter-spacing:-0.239px;">Class Assigned</div>
<div class="t" style="left:1341px;top:312px;letter-spacing:-0.264px;">Not Studied</div>
<div class="a" style="left:534px;top:344px;width:1019px;height:1px;background:#a0a0a0"></div>
<div class="t" style="left:536px;top:330px;letter-spacing:-0.267px;">Update</div>
<div class="t" style="left:620px;top:330px;letter-spacing:-0.081px;">17/01/2024 5:16:47 PM</div>
<div class="t" style="left:776px;top:330px;letter-spacing:-0.567px;">BSBCUS501</div>
<div class="t" style="left:922px;top:330px;letter-spacing:-0.306px;">Ryan Lee</div>
<div class="t" style="left:1040px;top:330px;letter-spacing:-0.744px;">CLASS_NO</div>
<div class="t" style="left:1230px;top:330px;letter-spacing:-0.567px;">BSBCUS501</div>
<div class="a" style="left:534px;top:362px;width:1019px;height:1px;background:#a0a0a0"></div>
<div class="t" style="left:536px;top:348px;letter-spacing:-0.267px;">Update</div>
<div class="t" style="left:620px;top:348px;letter-spacing:-0.081px;">17/01/2024 5:19:00 PM</div>
<div class="t" style="left:776px;top:348px;letter-spacing:-0.567px;">BSBCUS501</div>
<div class="t" style="left:922px;top:348px;letter-spacing:-0.306px;">Ryan Lee</div>
<div class="t" style="left:1040px;top:348px;letter-spacing:-0.729px;">ST_DATE</div>
<div class="t" style="left:1230px;top:348px;letter-spacing:0.000px;">2024-01-08</div>
<div class="t" style="left:1341px;top:348px;letter-spacing:0.000px;">2024-01-01</div>
<div class="a" style="left:534px;top:380px;width:1019px;height:1px;background:#a0a0a0"></div>
<div class="t" style="left:536px;top:366px;letter-spacing:-0.267px;">Update</div>
<div class="t" style="left:620px;top:366px;letter-spacing:-0.081px;">17/01/2024 5:19:00 PM</div>
<div class="t" style="left:776px;top:366px;letter-spacing:-0.567px;">BSBCUS501</div>
<div class="t" style="left:922px;top:366px;letter-spacing:-0.306px;">Ryan Lee</div>
<div class="t" style="left:1040px;top:366px;letter-spacing:-0.756px;">STATUS_NO</div>
<div class="t" style="left:1230px;top:366px;letter-spacing:-0.264px;">Not Studied</div>
<div class="t" style="left:1341px;top:366px;letter-spacing:-0.239px;">Class Assigned</div>
<div class="a" style="left:534px;top:398px;width:1019px;height:1px;background:#a0a0a0"></div>
<div class="t" style="left:536px;top:384px;letter-spacing:-0.267px;">Update</div>
<div class="t" style="left:620px;top:384px;letter-spacing:-0.081px;">17/01/2024 5:19:00 PM</div>
<div class="t" style="left:776px;top:384px;letter-spacing:-0.567px;">BSBCUS501</div>
<div class="t" style="left:922px;top:384px;letter-spacing:-0.306px;">Ryan Lee</div>
<div class="t" style="left:1040px;top:384px;letter-spacing:-0.744px;">CLASS_NO</div>
<div class="t" style="left:1341px;top:384px;letter-spacing:-0.567px;">BSBCUS501</div>
<div class="a" style="left:534px;top:416px;width:1019px;height:1px;background:#a0a0a0"></div>
<div class="t" style="left:536px;top:402px;letter-spacing:-0.267px;">Update</div>
<div class="t" style="left:620px;top:402px;letter-spacing:-0.081px;">17/01/2024 5:19:22 PM</div>
<div class="t" style="left:776px;top:402px;letter-spacing:-0.567px;">BSBCUS501</div>
<div class="t" style="left:922px;top:402px;letter-spacing:-0.306px;">Ryan Lee</div>
<div class="t" style="left:1040px;top:402px;letter-spacing:-0.756px;">STATUS_NO</div>
<div class="t" style="left:1230px;top:402px;letter-spacing:-0.239px;">Class Assigned</div>
<div class="t" style="left:1341px;top:402px;letter-spacing:-0.264px;">Not Studied</div>
<div class="a" style="left:534px;top:434px;width:1019px;height:1px;background:#a0a0a0"></div>
<div class="t" style="left:536px;top:420px;letter-spacing:-0.267px;">Update</div>
<div class="t" style="left:620px;top:420px;letter-spacing:-0.081px;">17/01/2024 5:19:22 PM</div>
<div class="t" style="left:776px;top:420px;letter-spacing:-0.567px;">BSBCUS501</div>
<div class="t" style="left:922px;top:420px;letter-spacing:-0.306px;">Ryan Lee</div>
<div class="t" style="left:1040px;top:420px;letter-spacing:-0.744px;">CLASS_NO</div>
<div class="t" style="left:1230px;top:420px;letter-spacing:-0.567px;">BSBCUS501</div>
<div class="a" style="left:534px;top:452px;width:1019px;height:1px;background:#a0a0a0"></div>
<div class="t" style="left:536px;top:438px;letter-spacing:-0.267px;">Update</div>
<div class="t" style="left:620px;top:438px;letter-spacing:-0.081px;">17/01/2024 5:23:16 PM</div>
<div class="t" style="left:776px;top:438px;letter-spacing:-0.567px;">BSBCUS501</div>
<div class="t" style="left:922px;top:438px;letter-spacing:-0.306px;">Ryan Lee</div>
<div class="t" style="left:1040px;top:438px;letter-spacing:-0.773px;">DELETE_DATE</div>
<div class="t" style="left:1341px;top:438px;letter-spacing:-0.105px;">17/Jan/2024</div>
<div class="a" style="left:534px;top:470px;width:1019px;height:1px;background:#a0a0a0"></div>
<div class="t" style="left:536px;top:456px;letter-spacing:-0.267px;">Insert</div>
<div class="t" style="left:620px;top:456px;letter-spacing:-0.081px;">17/01/2024 5:23:49 PM</div>
<div class="t" style="left:776px;top:456px;letter-spacing:-0.567px;">BSBCUS501</div>
<div class="t" style="left:922px;top:456px;letter-spacing:-0.306px;">Ryan Lee</div>
<div class="t" style="left:1040px;top:456px;letter-spacing:-0.756px;">STATUS_NO</div>
<div class="t" style="left:1341px;top:456px;letter-spacing:-0.264px;">Not Studied</div>
<div class="a" style="left:534px;top:488px;width:1019px;height:1px;background:#a0a0a0"></div>
<div class="t" style="left:536px;top:474px;letter-spacing:-0.267px;">Insert</div>
<div class="t" style="left:620px;top:474px;letter-spacing:-0.081px;">17/01/2024 5:32:38 PM</div>
<div class="t" style="left:776px;top:474px;letter-spacing:-0.510px;">PHY01</div>
<div class="t" style="left:922px;top:474px;letter-spacing:-0.306px;">Ryan Lee</div>
<div class="t" style="left:1040px;top:474px;letter-spacing:-0.756px;">STATUS_NO</div>
<div class="t" style="left:1341px;top:474px;letter-spacing:-0.264px;">Not Studied</div>
<div class="a" style="left:534px;top:506px;width:1019px;height:1px;background:#a0a0a0"></div>
<div class="t" style="left:536px;top:492px;letter-spacing:-0.267px;">Insert</div>
<div class="t" style="left:620px;top:492px;letter-spacing:-0.081px;">17/01/2024 5:32:38 PM</div>
<div class="t" style="left:776px;top:492px;letter-spacing:-0.607px;">MATHS01</div>
<div class="t" style="left:922px;top:492px;letter-spacing:-0.306px;">Ryan Lee</div>
<div class="t" style="left:1040px;top:492px;letter-spacing:-0.756px;">STATUS_NO</div>
<div class="t" style="left:1341px;top:492px;letter-spacing:-0.264px;">Not Studied</div>
<div class="a" style="left:534px;top:524px;width:1019px;height:1px;background:#a0a0a0"></div>
<div class="t" style="left:536px;top:510px;letter-spacing:-0.267px;">Update</div>
<div class="t" style="left:620px;top:510px;letter-spacing:-0.081px;">17/01/2024 5:34:24 PM</div>
<div class="t" style="left:776px;top:510px;letter-spacing:-0.567px;">BSBCUS501</div>
<div class="t" style="left:922px;top:510px;letter-spacing:-0.306px;">Ryan Lee</div>
<div class="t" style="left:1040px;top:510px;letter-spacing:-0.756px;">STATUS_NO</div>
<div class="t" style="left:1230px;top:510px;letter-spacing:-0.264px;">Not Studied</div>
<div class="t" style="left:1341px;top:510px;letter-spacing:-0.239px;">Class Assigned</div>
<div class="a" style="left:534px;top:542px;width:1019px;height:1px;background:#a0a0a0"></div>
<div class="t" style="left:536px;top:528px;letter-spacing:-0.267px;">Update</div>
<div class="t" style="left:620px;top:528px;letter-spacing:-0.081px;">17/01/2024 5:34:24 PM</div>
<div class="t" style="left:776px;top:528px;letter-spacing:-0.567px;">BSBCUS501</div>
<div class="t" style="left:922px;top:528px;letter-spacing:-0.306px;">Ryan Lee</div>
<div class="t" style="left:1040px;top:528px;letter-spacing:-0.744px;">CLASS_NO</div>
<div class="t" style="left:1341px;top:528px;letter-spacing:-0.567px;">BSBCUS501</div>
<div class="a" style="left:534px;top:560px;width:1019px;height:1px;background:#a0a0a0"></div>
<div class="t" style="left:536px;top:546px;letter-spacing:-0.267px;">Update</div>
<div class="t" style="left:620px;top:546px;letter-spacing:-0.081px;">17/01/2024 5:34:24 PM</div>
<div class="t" style="left:776px;top:546px;letter-spacing:-0.567px;">BSBCUS501</div>
<div class="t" style="left:922px;top:546px;letter-spacing:-0.306px;">Ryan Lee</div>
<div class="t" style="left:1040px;top:546px;letter-spacing:-0.744px;">END_DATE</div>
<div class="t" style="left:1341px;top:546px;letter-spacing:0.000px;">2024-01-26</div>
<div class="a" style="left:534px;top:578px;width:1019px;height:1px;background:#a0a0a0"></div>
<div class="t" style="left:536px;top:564px;letter-spacing:-0.267px;">Update</div>
<div class="t" style="left:620px;top:564px;letter-spacing:-0.081px;">17/01/2024 5:34:24 PM</div>
<div class="t" style="left:776px;top:564px;letter-spacing:-0.567px;">BSBCUS501</div>
<div class="t" style="left:922px;top:564px;letter-spacing:-0.306px;">Ryan Lee</div>
<div class="t" style="left:1040px;top:564px;letter-spacing:-0.729px;">ST_DATE</div>
<div class="t" style="left:1341px;top:564px;letter-spacing:0.000px;">2024-01-01</div>
<div class="a" style="left:534px;top:596px;width:1019px;height:1px;background:#a0a0a0"></div>
<div class="t" style="left:536px;top:582px;letter-spacing:-0.267px;">Update</div>
<div class="t" style="left:620px;top:582px;letter-spacing:-0.081px;">17/01/2024 5:36:33 PM</div>
<div class="t" style="left:776px;top:582px;letter-spacing:-0.567px;">BSBCUS501</div>
<div class="t" style="left:922px;top:582px;letter-spacing:-0.193px;">Ryan22 Leeigh22</div>
<div class="t" style="left:1040px;top:582px;letter-spacing:-0.756px;">STATUS_NO</div>
<div class="t" style="left:1230px;top:582px;letter-spacing:-0.239px;">Class Assigned</div>
<div class="t" style="left:1341px;top:582px;letter-spacing:-0.264px;">Not Studied</div>
<div class="a" style="left:534px;top:614px;width:1019px;height:1px;background:#a0a0a0"></div>
<div class="t" style="left:536px;top:600px;letter-spacing:-0.267px;">Update</div>
<div class="t" style="left:620px;top:600px;letter-spacing:-0.081px;">17/01/2024 5:36:33 PM</div>
<div class="t" style="left:776px;top:600px;letter-spacing:-0.567px;">BSBCUS501</div>
<div class="t" style="left:922px;top:600px;letter-spacing:-0.193px;">Ryan22 Leeigh22</div>
<div class="t" style="left:1040px;top:600px;letter-spacing:-0.744px;">CLASS_NO</div>
<div class="t" style="left:1230px;top:600px;letter-spacing:-0.567px;">BSBCUS501</div>
<div class="a" style="left:534px;top:632px;width:1019px;height:1px;background:#a0a0a0"></div>
<div class="t" style="left:536px;top:618px;letter-spacing:-0.267px;">Update</div>
<div class="t" style="left:620px;top:618px;letter-spacing:-0.081px;">17/01/2024 5:50:01 PM</div>
<div class="t" style="left:776px;top:618px;letter-spacing:-0.510px;">PHY01</div>
<div class="t" style="left:922px;top:618px;letter-spacing:-0.306px;">Ryan Lee</div>
<div class="t" style="left:1040px;top:618px;letter-spacing:-0.756px;">STATUS_NO</div>
<div class="t" style="left:1230px;top:618px;letter-spacing:-0.264px;">Not Studied</div>
<div class="t" style="left:1341px;top:618px;letter-spacing:-0.228px;">Commenced</div>
<div class="a" style="left:534px;top:650px;width:1019px;height:1px;background:#a0a0a0"></div>
<div class="t" style="left:536px;top:636px;letter-spacing:-0.267px;">Update</div>
<div class="t" style="left:620px;top:636px;letter-spacing:-0.081px;">17/01/2024 5:51:02 PM</div>
<div class="t" style="left:776px;top:636px;letter-spacing:-0.607px;">MATHS01</div>
<div class="t" style="left:922px;top:636px;letter-spacing:-0.306px;">Ryan Lee</div>
<div class="t" style="left:1040px;top:636px;letter-spacing:-0.756px;">STATUS_NO</div>
<div class="t" style="left:1230px;top:636px;letter-spacing:-0.264px;">Not Studied</div>
<div class="t" style="left:1341px;top:636px;letter-spacing:-0.261px;">Recognised Prior Learning (RPL)</div>
<div class="a" style="left:534px;top:668px;width:1019px;height:1px;background:#a0a0a0"></div>
<div class="t" style="left:536px;top:654px;letter-spacing:-0.267px;">Update</div>
<div class="t" style="left:620px;top:654px;letter-spacing:-0.081px;">17/01/2024 5:51:02 PM</div>
<div class="t" style="left:776px;top:654px;letter-spacing:-0.607px;">MATHS01</div>
<div class="t" style="left:922px;top:654px;letter-spacing:-0.306px;">Ryan Lee</div>
<div class="t" style="left:1040px;top:654px;letter-spacing:-0.744px;">END_DATE</div>
<div class="t" style="left:1341px;top:654px;letter-spacing:0.000px;">2024-01-20</div>
<div class="a" style="left:534px;top:686px;width:1019px;height:1px;background:#a0a0a0"></div>
<div class="t" style="left:536px;top:672px;letter-spacing:-0.267px;">Update</div>
<div class="t" style="left:620px;top:672px;letter-spacing:-0.081px;">17/01/2024 5:51:02 PM</div>
<div class="t" style="left:776px;top:672px;letter-spacing:-0.607px;">MATHS01</div>
<div class="t" style="left:922px;top:672px;letter-spacing:-0.306px;">Ryan Lee</div>
<div class="t" style="left:1040px;top:672px;letter-spacing:-0.729px;">ST_DATE</div>
<div class="t" style="left:1341px;top:672px;letter-spacing:0.000px;">2024-01-15</div>
<div class="a" style="left:534px;top:704px;width:1019px;height:1px;background:#a0a0a0"></div>
<div class="t" style="left:536px;top:690px;letter-spacing:-0.267px;">Update</div>
<div class="t" style="left:620px;top:690px;letter-spacing:-0.081px;">17/01/2024 5:52:35 PM</div>
<div class="t" style="left:776px;top:690px;letter-spacing:-0.567px;">BSBCUS501</div>
<div class="t" style="left:922px;top:690px;letter-spacing:-0.193px;">Ryan22 Leeigh22</div>
<div class="t" style="left:1040px;top:690px;letter-spacing:-0.756px;">STATUS_NO</div>
<div class="t" style="left:1230px;top:690px;letter-spacing:-0.264px;">Not Studied</div>
<div class="t" style="left:1341px;top:690px;letter-spacing:-0.239px;">Class Assigned</div>
<div class="a" style="left:534px;top:722px;width:1019px;height:1px;background:#a0a0a0"></div>
<div class="t" style="left:536px;top:708px;letter-spacing:-0.267px;">Update</div>
<div class="t" style="left:620px;top:708px;letter-spacing:-0.081px;">17/01/2024 5:52:35 PM</div>
<div class="t" style="left:776px;top:708px;letter-spacing:-0.567px;">BSBCUS501</div>
<div class="t" style="left:922px;top:708px;letter-spacing:-0.193px;">Ryan22 Leeigh22</div>
<div class="t" style="left:1040px;top:708px;letter-spacing:-0.744px;">CLASS_NO</div>
<div class="t" style="left:1341px;top:708px;letter-spacing:-0.567px;">BSBCUS501</div>
<div class="a" style="left:534px;top:740px;width:1019px;height:1px;background:#a0a0a0"></div>
<div class="t" style="left:536px;top:726px;letter-spacing:-0.267px;">Update</div>
<div class="t" style="left:620px;top:726px;letter-spacing:-0.081px;">17/01/2024 5:53:02 PM</div>
<div class="t" style="left:776px;top:726px;letter-spacing:-0.510px;">PHY01</div>
<div class="t" style="left:922px;top:726px;letter-spacing:-0.306px;">Ryan Lee</div>
<div class="t" style="left:1040px;top:726px;letter-spacing:-0.756px;">STATUS_NO</div>
<div class="t" style="left:1230px;top:726px;letter-spacing:-0.228px;">Commenced</div>
<div class="t" style="left:1341px;top:726px;letter-spacing:-0.228px;">Withdrawn</div>
<div class="a" style="left:534px;top:758px;width:1019px;height:1px;background:#a0a0a0"></div>
<div class="t" style="left:536px;top:744px;letter-spacing:-0.267px;">Update</div>
<div class="t" style="left:620px;top:744px;letter-spacing:-0.081px;">17/01/2024 5:54:02 PM</div>
<div class="t" style="left:776px;top:744px;letter-spacing:-0.567px;">BSBCUS402</div>
<div class="t" style="left:922px;top:744px;letter-spacing:-0.306px;">Ryan Lee</div>
<div class="t" style="left:1040px;top:744px;letter-spacing:-0.756px;">STATUS_NO</div>
<div class="t" style="left:1230px;top:744px;letter-spacing:-0.264px;">Not Studied</div>
<div class="t" style="left:1341px;top:744px;letter-spacing:-0.261px;">Recognised Prior Learning (RPL)</div>
<div class="a" style="left:534px;top:776px;width:1019px;height:1px;background:#a0a0a0"></div>
<div class="t" style="left:536px;top:762px;letter-spacing:-0.267px;">Update</div>
<div class="t" style="left:620px;top:762px;letter-spacing:-0.081px;">17/01/2024 5:55:37 PM</div>
<div class="t" style="left:776px;top:762px;letter-spacing:-0.567px;">BSBCUS501</div>
<div class="t" style="left:922px;top:762px;letter-spacing:-0.193px;">Ryan22 Leeigh22</div>
<div class="t" style="left:1040px;top:762px;letter-spacing:-0.756px;">STATUS_NO</div>
<div class="t" style="left:1230px;top:762px;letter-spacing:-0.239px;">Class Assigned</div>
<div class="t" style="left:1341px;top:762px;letter-spacing:-0.264px;">Not Studied</div>
<div class="a" style="left:534px;top:794px;width:1019px;height:1px;background:#a0a0a0"></div>
<div class="t" style="left:536px;top:780px;letter-spacing:-0.267px;">Update</div>
<div class="t" style="left:620px;top:780px;letter-spacing:-0.081px;">17/01/2024 5:55:37 PM</div>
<div class="t" style="left:776px;top:780px;letter-spacing:-0.567px;">BSBCUS501</div>
<div class="t" style="left:922px;top:780px;letter-spacing:-0.193px;">Ryan22 Leeigh22</div>
<div class="t" style="left:1040px;top:780px;letter-spacing:-0.744px;">CLASS_NO</div>
<div class="t" style="left:1230px;top:780px;letter-spacing:-0.567px;">BSBCUS501</div>
<div class="a" style="left:534px;top:806px;width:1151px;height:1px;background:#d6d6d6"></div>
<div class="a" style="left:1685px;top:237px;width:17px;height:569px;background-color:#f7f7f7;background-image:linear-gradient(45deg,#e4e4e4 25%,transparent 25%,transparent 75%,#e4e4e4 75%),linear-gradient(45deg,#e4e4e4 25%,transparent 25%,transparent 75%,#e4e4e4 75%);background-size:2px 2px;background-position:0 0,1px 1px"></div>
<div class="a" style="left:1685px;top:237px;width:17px;height:17px;background:#f0f0f0;border:1px solid;border-color:#f0f0f0 #696969 #696969 #f0f0f0;box-shadow:inset 1px 1px 0 #fff,inset -1px -1px 0 #a0a0a0"></div>
<svg style="left:1685px;top:237px" width="17" height="17"><path d="M4.5 10.5 L8.5 6.5 L12.5 10.5 z" fill="#000"/></svg>
<div class="a" style="left:1685px;top:517px;width:17px;height:271px;background:#f0f0f0;border:1px solid;border-color:#f0f0f0 #696969 #696969 #f0f0f0;box-shadow:inset 1px 1px 0 #fff,inset -1px -1px 0 #a0a0a0"></div>
<div class="a" style="left:1685px;top:788px;width:17px;height:17px;background:#f0f0f0;border:1px solid;border-color:#f0f0f0 #696969 #696969 #f0f0f0;box-shadow:inset 1px 1px 0 #fff,inset -1px -1px 0 #a0a0a0"></div>
<svg style="left:1685px;top:788px" width="17" height="17"><path d="M4.5 6.5 L8.5 10.5 L12.5 6.5 z" fill="#000"/></svg>
<div class="a" style="left:1617px;top:815px;width:73px;height:23px;background:#fdfdfd;border:1px solid #0067c0;border-radius:4px;box-shadow:inset 0 0 0 1px #fff"></div>
<div class="t" style="left:1640px;top:821px;font-size:11px">Close</div>
<div class="a" style="left:832px;top:700px;width:743px;height:115px;border:8px solid rgba(212,52,58,.6);box-shadow:0 3px 6px rgba(0,0,0,.3), inset 0 0 5px rgba(0,0,0,.22)"></div>
</body></html>
